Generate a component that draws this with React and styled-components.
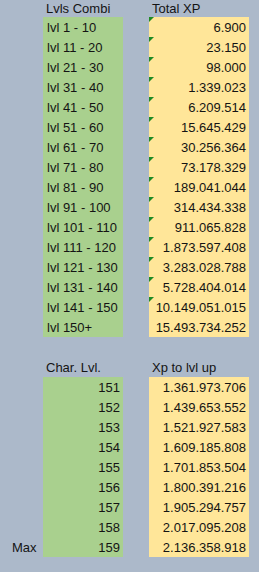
import React from 'react'
import styled, { createGlobalStyle, css } from 'styled-components'

const Colors = {
    sheet: '#acb9ca',
    green: '#a9d08e',
    yellow: '#ffe699',
    flag: '#1f8a24',
    text: '#141414',
}

const GlobalStyle = createGlobalStyle`
  html, body {
    margin: 0;
    padding: 0;
    background: ${Colors.sheet};
  }
  body {
    font-family: "Liberation Sans", Arial, sans-serif;
    color: ${Colors.text};
  }
`;

const Sheet = styled.div`
    width: 259px;
    height: 572px;
    display: grid;
    grid-template-columns: 43px 80px 26px 100px 1fr;
    grid-template-rows: 17px repeat(16, 20px) 20px 20px repeat(9, 20px);
    font-size: 13px;
    background: ${Colors.sheet};
    overflow: hidden;
`;

const cellText = css`
    height: 20px;
    line-height: 22px;
    white-space: nowrap;
    overflow: visible;
`;

const Blank = styled.div``;

const HeaderCell = styled.div`
    ${cellText}
    height: ${p => (p.$top ? '17px' : '20px')};
    line-height: ${p => (p.$top ? '17px' : '21px')};
    padding-left: 3px;
`;

const RowLabel = styled.div`
    ${cellText}
    padding-left: 12px;
`;

const LabelCell = styled.div`
    ${cellText}
    background: ${Colors.green};
    padding: 0 3px 0 4px;
    text-align: ${p => (p.$right ? 'right' : 'left')};
`;

const ValueCell = styled.div`
    ${cellText}
    position: relative;
    background: ${Colors.yellow};
    padding: 0 3px;
    text-align: right;
    ${p => p.$flag && css`
        &::before {
            content: '';
            position: absolute;
            top: 0;
            left: 0;
            border-top: 5px solid ${Colors.flag};
            border-right: 5px solid transparent;
        }
    `}
`;

const combis = [
    ['lvl 1 - 10', '6.900'],
    ['lvl 11 - 20', '23.150'],
    ['lvl 21 - 30', '98.000'],
    ['lvl 31 - 40', '1.339.023'],
    ['lvl 41 - 50', '6.209.514'],
    ['lvl 51 - 60', '15.645.429'],
    ['lvl 61 - 70', '30.256.364'],
    ['lvl 71 - 80', '73.178.329'],
    ['lvl 81 - 90', '189.041.044'],
    ['lvl 91 - 100', '314.434.338'],
    ['lvl 101 - 110', '911.065.828'],
    ['lvl 111 - 120', '1.873.597.408'],
    ['lvl 121 - 130', '3.283.028.788'],
    ['lvl 131 - 140', '5.728.404.014'],
    ['lvl 141 - 150', '10.149.051.015'],
    ['lvl 150+', '15.493.734.252'],
]

const levelUps = [
    ['151', '1.361.973.706'],
    ['152', '1.439.653.552'],
    ['153', '1.521.927.583'],
    ['154', '1.609.185.808'],
    ['155', '1.701.853.504'],
    ['156', '1.800.391.216'],
    ['157', '1.905.294.757'],
    ['158', '2.017.095.208'],
    ['159', '2.136.358.918'],
]

function App () {
    return (
        <>
        <GlobalStyle />
        <Sheet>
            <Blank />
            <HeaderCell $top>Lvls Combi</HeaderCell>
            <Blank />
            <HeaderCell $top>Total XP</HeaderCell>
            <Blank />

            {combis.map(([label, xp], i) => (
                <React.Fragment key={label}>
                    <Blank />
                    <LabelCell>{label}</LabelCell>
                    <Blank />
                    <ValueCell $flag={i < combis.length - 1}>{xp}</ValueCell>
                    <Blank />
                </React.Fragment>
            ))}

            {/* empty spacer row */}
            <Blank /><Blank /><Blank /><Blank /><Blank />

            <Blank />
            <HeaderCell>Char. Lvl.</HeaderCell>
            <Blank />
            <HeaderCell>Xp to lvl up</HeaderCell>
            <Blank />

            {levelUps.map(([lvl, xp], i) => (
                <React.Fragment key={lvl}>
                    {i === levelUps.length - 1 ? <RowLabel>Max</RowLabel> : <Blank />}
                    <LabelCell $right>{lvl}</LabelCell>
                    <Blank />
                    <ValueCell>{xp}</ValueCell>
                    <Blank />
                </React.Fragment>
            ))}
        </Sheet>
        </>
    )
}

export default App
